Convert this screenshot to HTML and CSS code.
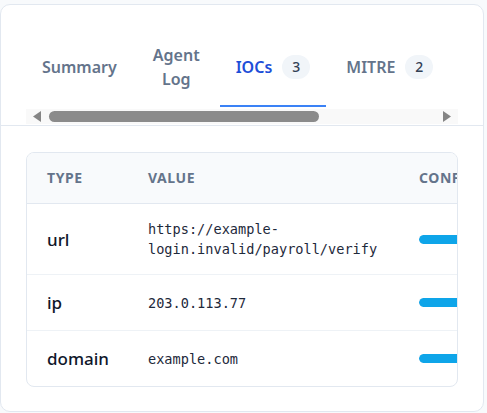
FILE: index.html
```html
<!DOCTYPE html>
<html lang="en">
<head>
    <meta charset="UTF-8">
    <meta name="viewport" content="width=device-width, initial-scale=1.0">
    <title>Incident - IOCs</title>
    <link rel="stylesheet" href="styles.css">
</head>
<body>
    <div class="panel">
        <div class="tabs-bar">
            <div class="tabs">
                <button class="tab">Summary</button>
                <button class="tab">Agent Log</button>
                <button class="tab active">IOCs <span class="count">3</span></button>
                <button class="tab">MITRE <span class="count">2</span></button>
            </div>
            <!-- horizontal scrollbar of the tab strip -->
            <div class="scrollbar">
                <svg class="scroll-arrow" width="18" height="15" viewBox="0 0 18 15"><path d="M15 2v11L7 7.5z" fill="#858585"/></svg>
                <div class="scroll-track"><div class="scroll-thumb"></div></div>
                <svg class="scroll-arrow" width="18" height="15" viewBox="0 0 18 15"><path d="M3 2v11l8-5.5z" fill="#858585"/></svg>
            </div>
        </div>

        <div class="panel-body">
            <div class="table-wrap">
                <table class="ioc-table">
                    <thead>
                        <tr>
                            <th class="col-type">Type</th>
                            <th class="col-value">Value</th>
                            <th class="col-conf">Confidence</th>
                        </tr>
                    </thead>
                    <tbody>
                        <tr>
                            <td class="ioc-type">url</td>
                            <td class="ioc-value">https://example-login.invalid/payroll/verify</td>
                            <td><div class="conf-bar"><div class="conf-fill" style="width: 92%"></div></div></td>
                        </tr>
                        <tr>
                            <td class="ioc-type">ip</td>
                            <td class="ioc-value">203.0.113.77</td>
                            <td><div class="conf-bar"><div class="conf-fill" style="width: 85%"></div></div></td>
                        </tr>
                        <tr>
                            <td class="ioc-type">domain</td>
                            <td class="ioc-value">example.com</td>
                            <td><div class="conf-bar"><div class="conf-fill" style="width: 70%"></div></div></td>
                        </tr>
                    </tbody>
                </table>
            </div>
        </div>
    </div>
</body>
</html>
```

FILE: styles.css
```css
* {
    box-sizing: border-box;
}

body {
    font-family: "Noto Sans", "Open Sans", sans-serif;
    background-color: #f8fafc;
    margin: 0;
    padding: 4px 3px 0 0;
    color: #0f172a;
}

.panel {
    background-color: #fff;
    border: 1px solid #e2e8f0;
    border-radius: 10px;
}

.tabs-bar {
    padding: 22px 25px 1px;
    border-bottom: 1px solid #e2e8f0;
}

.tabs {
    display: flex;
    gap: 4px;
    overflow: hidden;
}

.tab {
    flex: none;
    width: min-content;
    display: flex;
    align-items: center;
    gap: 10px;
    padding: 16px 16px 14px;
    background: none;
    border: none;
    border-bottom: 2px solid transparent;
    font-family: inherit;
    font-size: 16px;
    font-weight: 600;
    line-height: 24px;
    color: #64748b;
    text-align: center;
    cursor: pointer;
}

.tab.active {
    color: #1d4ed8;
    border-bottom-color: #3b82f6;
}

.count {
    min-width: 28px;
    height: 24px;
    padding: 0 8px;
    border-radius: 12px;
    background-color: #f1f5f9;
    color: #334155;
    font-size: 14px;
    font-weight: 500;
    line-height: 24px;
}

.scrollbar {
    display: flex;
    align-items: center;
    height: 15px;
    margin-top: 2px;
    background-color: #f9f9f9;
}

.scroll-arrow {
    flex: none;
}

.scroll-track {
    flex: 1;
    padding-left: 5px;
}

.scroll-thumb {
    width: 270px;
    height: 11px;
    border-radius: 6px;
    background-color: #8b8b8b;
}

.panel-body {
    padding: 26px 25px 24px;
}

.table-wrap {
    border: 1px solid #e2e8f0;
    border-radius: 8px;
    overflow: hidden;
}

.ioc-table {
    width: 560px;
    table-layout: fixed;
    border-collapse: collapse;
}

.ioc-table th {
    padding: 16px 20px;
    background-color: #f8fafc;
    border-bottom: 1px solid #e2e8f0;
    text-align: left;
    font-size: 14px;
    font-weight: 700;
    line-height: 18px;
    letter-spacing: 0.04em;
    text-transform: uppercase;
    color: #64748b;
    white-space: nowrap;
}

.col-type {
    width: 101px;
}

.col-value {
    width: 271px;
}

.ioc-table td {
    padding: 15px 20px;
    border-bottom: 1px solid #eef2f6;
    vertical-align: middle;
}

.ioc-table tbody tr:last-child td {
    border-bottom: none;
}

.ioc-type {
    font-size: 17px;
    font-weight: 500;
    line-height: 25px;
    color: #0f172a;
}

.ioc-value {
    font-family: "DejaVu Sans Mono", monospace;
    font-size: 13.6px;
    line-height: 20px;
    color: #1e293b;
}

.conf-bar {
    width: 110px;
    height: 9px;
    border-radius: 5px;
    background-color: #e2e8f0;
    overflow: hidden;
}

.conf-fill {
    height: 100%;
    border-radius: 5px;
    background-color: #0ea5e9;
}
```
